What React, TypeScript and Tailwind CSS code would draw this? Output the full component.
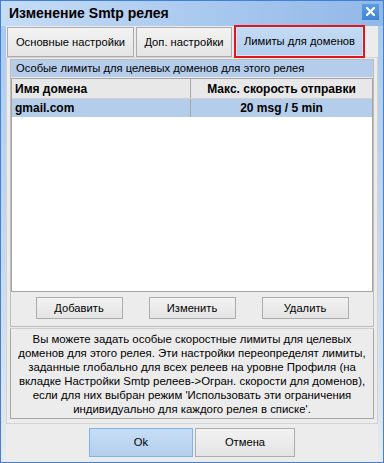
import React from 'react';

const font = { fontFamily: '"Liberation Sans", Arial, sans-serif' };

const infoLines = [
  'Вы можете задать особые скоростные лимиты для целевых',
  'доменов для этого релея. Эти настройки переопределят лимиты,',
  'заданные глобально для всех релеев на уровне Профиля (на',
  'вкладке Настройки Smtp релеев->Огран. скорости для доменов),',
  "если для них выбран режим 'Использовать эти ограничения",
  "индивидуально для каждого релея в списке'.",
];

function Tab({ label, width }: { label: string; width: string }) {
  return (
    <div
      className={`${width} h-[30px] flex items-center justify-center border border-[#acacac] bg-gradient-to-b from-[#f3f3f3] to-[#e5e5e5] text-[11.2px] text-black whitespace-nowrap`}
    >
      {label}
    </div>
  );
}

function Button({ label, primary, width, height }: { label: string; primary?: boolean; width: string; height: string }) {
  return (
    <button
      className={`${width} ${height} flex items-center justify-center text-[11.2px] text-black border ${
        primary
          ? 'border-[#7eb4ea] bg-gradient-to-b from-[#c7ddf5] to-[#b4cfee]'
          : 'border-[#acacac] bg-gradient-to-b from-[#f2f2f2] to-[#e4e4e4]'
      }`}
    >
      {label}
    </button>
  );
}

export default function App() {
  return (
    <div
      style={font}
      className="w-[384px] h-[463px] flex flex-col border border-[#3f81d6] bg-gradient-to-b from-[#a9c9ef] via-[#c4d7ee] to-[#e6e9ee] overflow-hidden"
    >
      {/* Title bar */}
      <div className="h-[25px] shrink-0 flex items-center justify-between pl-[8px] pr-[4px] bg-gradient-to-r from-[#c5dcf6] to-[#92b8e7]">
        <span className="text-[14px] font-bold text-black">Изменение Smtp релея</span>
        <div className="w-[17px] h-[16px] -mt-[4px] flex items-center justify-center bg-gradient-to-b from-[#5b9ce6] to-[#3f83d6]">
          <svg width="9" height="9" viewBox="0 0 9 9">
            <path d="M1 1 L8 8 M8 1 L1 8" stroke="white" strokeWidth="2.2" strokeLinecap="square" />
          </svg>
        </div>
      </div>

      {/* Client area */}
      <div className="flex-1 mx-[5px] bg-[#ececec] flex flex-col">
        {/* Tabs */}
        <div className="h-[31px] shrink-0 flex items-end gap-[2px] pl-[1px]">
          <Tab label="Основные настройки" width="w-[127px]" />
          <Tab label="Доп. настройки" width="w-[96px]" />
          <div className="w-[131px] h-[33px] -mb-[1px] relative z-10 border-2 border-[#e2141c]">
            <div className="w-full h-full flex items-center justify-center border border-[#d6e6f8] bg-gradient-to-b from-[#c4dbf4] to-[#b3cdec] text-[11.2px] text-black whitespace-nowrap">
              Лимиты для доменов
            </div>
          </div>
        </div>

        {/* Tab panel */}
        <div className="h-[367px] shrink-0 border border-[#d4d4d4] px-[3px] pt-px pb-[4px] flex flex-col">
          {/* Group */}
          <div className="h-[268px] shrink-0 border border-[#bdbdbd] flex flex-col">
            <div className="h-[17px] shrink-0 flex items-center pl-[5px] bg-[#b5cdeb] text-[11.2px] text-black whitespace-nowrap">
              Особые лимиты для целевых доменов для этого релея
            </div>
            <div className="h-[214px] shrink-0 mt-px border border-[#a3a3a3] bg-white flex flex-col">
              <div className="h-[20px] flex bg-[#e8e8e8] border-b border-[#d0d0d0] text-[12px] font-bold text-black">
                <div className="w-[179px] flex items-center pl-[3px] border-r border-[#a9a9a9]">Имя домена</div>
                <div className="flex-1 flex items-center justify-center">Макс. скорость отправки</div>
              </div>
              <div className="h-[18px] flex bg-[#b4cdeb] text-[12px] font-bold text-black">
                <div className="w-[179px] flex items-center pl-[3px] border-r border-[#a9a9a9]">gmail.com</div>
                <div className="flex-1 flex items-center justify-center">20 msg / 5 min</div>
              </div>
            </div>
            <div className="flex-1 flex items-center justify-center gap-[26px] pb-[2px]">
              <Button label="Добавить" width="w-[87px]" height="h-[22px]" />
              <Button label="Изменить" width="w-[87px]" height="h-[22px]" />
              <Button label="Удалить" width="w-[87px]" height="h-[22px]" />
            </div>
          </div>

          {/* Info */}
          <div className="flex-1 min-h-0 mt-px border border-[#a6a6a6] border-t-[#cfcfcf] flex flex-col items-center justify-center text-[11.4px] leading-[14px] text-black text-center whitespace-nowrap overflow-hidden">
            {infoLines.map((l) => (
              <div key={l}>{l}</div>
            ))}
          </div>
        </div>

        {/* Bottom buttons */}
        <div className="flex-1 flex justify-center items-start pt-[4px] gap-[2px]">
          <Button label="Ok" primary width="w-[104px]" height="h-[29px]" />
          <Button label="Отмена" width="w-[100px]" height="h-[29px]" />
        </div>
      </div>
    </div>
  );
}
